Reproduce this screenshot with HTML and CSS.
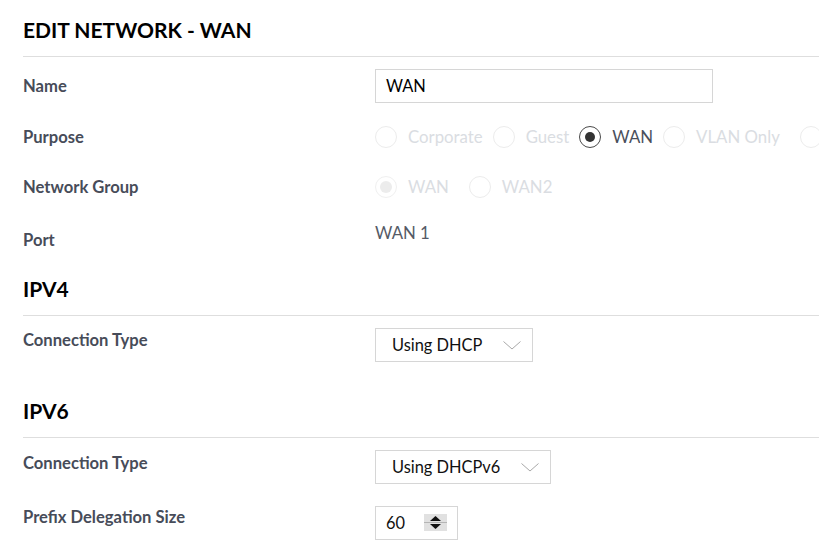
FILE: index.html
```html
<!DOCTYPE html>
<html>
<head>
<meta charset="utf-8">
<link rel="stylesheet" href="styles.css">
</head>
<body>
<div class="page">
  <h2 class="section-title first">EDIT NETWORK - WAN</h2>

  <div class="row row-name">
    <div class="label">Name</div>
    <div class="value"><div class="text-input">WAN</div></div>
  </div>

  <div class="row">
    <div class="label">Purpose</div>
    <div class="value radios">
      <span class="radio disabled"><span class="circle"></span><span class="rtext">Corporate</span></span>
      <span class="radio disabled"><span class="circle"></span><span class="rtext">Guest</span></span>
      <span class="radio checked"><span class="circle"><span class="dot"></span></span><span class="rtext">WAN</span></span>
      <span class="radio disabled wide"><span class="circle"></span><span class="rtext">VLAN Only</span></span>
      <span class="radio disabled"><span class="circle"></span></span>
    </div>
  </div>

  <div class="row">
    <div class="label">Network Group</div>
    <div class="value radios">
      <span class="radio disabled checked-disabled wide"><span class="circle"><span class="dot"></span></span><span class="rtext">WAN</span></span>
      <span class="radio disabled"><span class="circle"></span><span class="rtext">WAN2</span></span>
    </div>
  </div>

  <div class="row row-port">
    <div class="label">Port</div>
    <div class="value port-value">WAN 1</div>
  </div>

  <h2 class="section-title ipv4">IPV4</h2>

  <div class="row row-top">
    <div class="label label-conn">Connection Type</div>
    <div class="value">
      <div class="select"><span>Using DHCP</span>
        <svg class="chev" width="18" height="9" viewBox="0 0 18 9"><path d="M0.5 0.5 L9 8 L17.5 0.5" fill="none" stroke="#a8a8a8" stroke-width="1"/></svg>
      </div>
    </div>
  </div>

  <h2 class="section-title ipv6">IPV6</h2>

  <div class="row row-top">
    <div class="label label-conn6">Connection Type</div>
    <div class="value">
      <div class="select"><span>Using DHCPv6</span>
        <svg class="chev" width="18" height="9" viewBox="0 0 18 9"><path d="M0.5 0.5 L9 8 L17.5 0.5" fill="none" stroke="#a8a8a8" stroke-width="1"/></svg>
      </div>
    </div>
  </div>

  <div class="row row-top row-prefix">
    <div class="label label-prefix">Prefix Delegation Size</div>
    <div class="value">
      <div class="number-input"><span class="num">60</span>
        <svg class="spin" width="23" height="17" viewBox="0 0 23 17">
          <rect x="0" y="0" width="23" height="17" fill="#e1e1e1"/>
          <line x1="0" y1="8.5" x2="23" y2="8.5" stroke="#b5b5b5" stroke-width="1"/>
          <path d="M6 7 L17 7 L11.5 2 Z" fill="#111"/>
          <path d="M6 10 L17 10 L11.5 15 Z" fill="#111"/>
        </svg>
      </div>
    </div>
  </div>
</div>
</body>
</html>
```

FILE: styles.css
```css
html, body {
  margin: 0;
  padding: 0;
  background: #ffffff;
  overflow: hidden;
}

body {
  font-family: Lato, "Open Sans", "Liberation Sans", sans-serif;
  width: 819px;
  height: 544px;
}

.page {
  padding-left: 23px;
}

.section-title {
  margin: 0;
  font-size: 21px;
  line-height: 26px;
  font-weight: 700;
  color: #000;
  padding-bottom: 13px;
  border-bottom: 1px solid #dedede;
}

.section-title.first {
  padding-top: 17px;
}

.section-title.ipv4 {
  margin-top: 21px;
}

.section-title.ipv6 {
  margin-top: 36px;
}

.row {
  display: flex;
  align-items: center;
  min-height: 34px;
  margin-top: 16.5px;
  white-space: nowrap;
}

.row-name {
  margin-top: 12px;
}

.label {
  width: 352px;
  flex: none;
  font-size: 16.6px;
  line-height: 20px;
  font-weight: 700;
  color: #474c59;
}

.value {
  display: flex;
  align-items: center;
}

.text-input {
  box-sizing: border-box;
  width: 338px;
  height: 34px;
  border: 1px solid #d6d6d6;
  padding-left: 10px;
  font-size: 16.4px;
  line-height: 32px;
  color: #000;
}

.radios {
  flex-wrap: nowrap;
}

.radio {
  display: inline-flex;
  align-items: center;
  margin-right: 10px;
}

.radio.wide {
  margin-right: 20px;
}

.circle {
  box-sizing: border-box;
  width: 22px;
  height: 22px;
  border-radius: 50%;
  border: 1px solid #ececec;
  display: inline-flex;
  align-items: center;
  justify-content: center;
  flex: none;
}

.rtext {
  margin-left: 11px;
  font-size: 16.8px;
  line-height: 22px;
  color: #dadde2;
}

.radio.checked .circle {
  border: 1.5px solid #4a4a4a;
}

.radio.checked .dot {
  width: 10px;
  height: 10px;
  border-radius: 50%;
  background: #333333;
}

.radio.checked .rtext {
  color: #4a4f5c;
}

.radio.checked-disabled .circle {
  border-color: #f0f0f0;
}

.radio.checked-disabled .dot {
  width: 12px;
  height: 12px;
  border-radius: 50%;
  background: #ececec;
}

.row-port {
  align-items: flex-start;
}

.row-port .label {
  padding-top: 9px;
}

.port-value {
  padding-top: 2px;
  font-size: 16.8px;
  line-height: 20px;
  color: #555a66;
}

.row-top {
  align-items: flex-start;
  margin-top: 12px;
}

.label-conn {
  padding-top: 2px;
}

.label-conn6 {
  padding-top: 3px;
}

.row-prefix {
  margin-top: 22px;
}

.label-prefix {
  padding-top: 1px;
}

.select {
  box-sizing: border-box;
  height: 34px;
  border: 1px solid #d6d6d6;
  display: inline-flex;
  align-items: center;
  padding: 0 11px 0 16px;
  font-size: 16.4px;
  color: #111;
}

.select .chev {
  margin-left: 21px;
  margin-top: 2px;
}

.number-input {
  box-sizing: border-box;
  width: 83px;
  height: 34px;
  border: 1px solid #d6d6d6;
  display: flex;
  align-items: center;
  justify-content: space-between;
  padding: 0 10px 0 10px;
  font-size: 16.4px;
  color: #111;
}
```
